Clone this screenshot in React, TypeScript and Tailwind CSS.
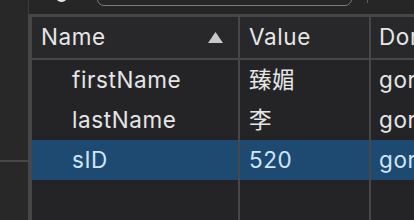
import { type ReactNode } from "react";

type Row = { name: string; value: string; domain: string; selected?: boolean };

const rows: Row[] = [
  { name: "firstName", value: "臻媚", domain: "gor" },
  { name: "lastName", value: "李", domain: "gor" },
  { name: "sID", value: "520", domain: "gor", selected: true },
];

function Cell({ children, className = "" }: { children?: ReactNode; className?: string }) {
  return (
    <div className={`flex h-full items-center overflow-hidden whitespace-nowrap ${className}`}>
      {children}
    </div>
  );
}

export default function App() {
  return (
    <div
      className="flex h-[220px] w-[414px] overflow-hidden bg-[#282828] text-[22.5px] leading-none tracking-[0.6px] text-[#e6e6e6]"
      style={{ fontFamily: "Inter, 'Noto Sans CJK SC', sans-serif" }}
    >
      {/* left side strip */}
      <div className="flex w-[28px] shrink-0 flex-col">
        <div className="h-[162px] border-b-2 border-[#474747]" />
        <div className="flex-1" />
      </div>

      <div className="flex min-w-0 flex-1 flex-col">
        {/* toolbar, mostly scrolled off the top */}
        <div className="flex h-[14px] shrink-0 items-end border-l border-[#3c3c3c] bg-[#262626]">
          <div className="ml-[26px] -mt-[12px] h-[14px] w-[13px] shrink-0 self-start rounded-full bg-[#e8e8e8]" />
          <div className="ml-[29px] mb-[8px] h-[30px] w-[255px] shrink-0 self-end rounded-[7px] border-[1.5px] border-[#7c7c7c]" />
          <div className="ml-[15px] h-[3px] w-px shrink-0 self-start bg-[#5c5c5c]" />
        </div>
        <div className="h-[3px] shrink-0 bg-[#464646]" />

        {/* table */}
        <div className="flex flex-1 flex-col border-l-4 border-[#474747] bg-[#242427]">
          <div className="grid h-[43px] shrink-0 grid-cols-[208px_131px_1fr] border-b-2 border-[#474747] bg-[#28282b]">
            <Cell className="justify-between border-r-2 border-[#474747] pl-[9px] pr-[15px]">
              <span>Name</span>
              <svg width="15" height="11" viewBox="0 0 15 11">
                <polygon points="7.5,0 15,11 0,11" fill="#c9c9c9" />
              </svg>
            </Cell>
            <Cell className="border-r-2 border-[#474747] pl-[9px]">Value</Cell>
            <Cell className="pl-[8px]">Domain</Cell>
          </div>

          {rows.map((r) => (
            <div
              key={r.name}
              className={`grid h-[40px] shrink-0 grid-cols-[208px_131px_1fr] ${
                r.selected ? "bg-[#1e4a72] text-[#cde5ff]" : ""
              }`}
            >
              <Cell className="border-r-2 border-[#474747] pl-[40px]">{r.name}</Cell>
              <Cell className="border-r-2 border-[#474747] pl-[9px]">{r.value}</Cell>
              <Cell className="pl-[8px]">{r.domain}</Cell>
            </div>
          ))}

          <div className="grid flex-1 grid-cols-[208px_131px_1fr]">
            <div className="border-r-2 border-[#474747]" />
            <div className="border-r-2 border-[#474747]" />
            <div />
          </div>
        </div>
      </div>
    </div>
  );
}
